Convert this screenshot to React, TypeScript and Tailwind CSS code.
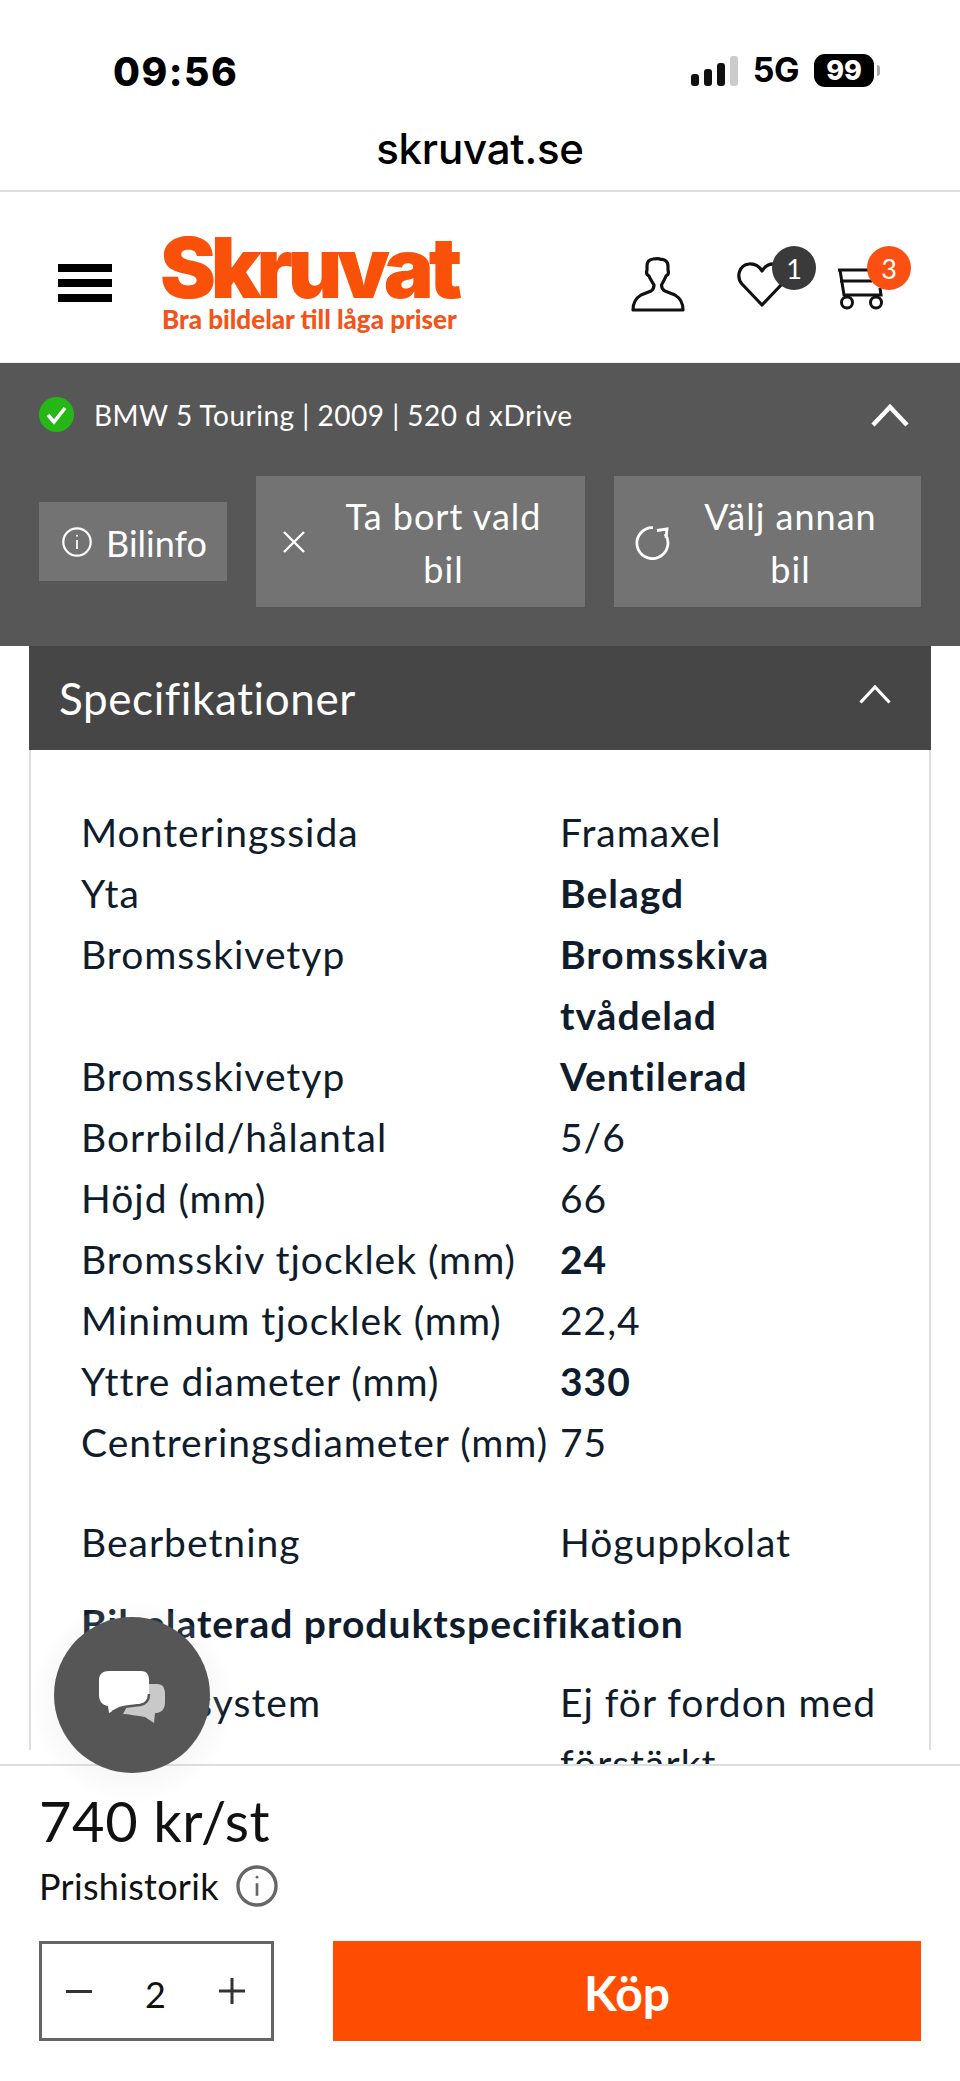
import React from "react";

const F = "font-['Lato','Noto_Sans',sans-serif]";

function Row({ label, value, bold }: { label: string; value: React.ReactNode; bold?: boolean }) {
  return (
    <>
      <div className="whitespace-nowrap">{label}</div>
      <div className={bold ? "font-bold" : ""}>{value}</div>
    </>
  );
}

function Person() {
  return (
    <svg width="54" height="55" viewBox="0 0 54 55" fill="none" stroke="#111" strokeWidth="3.2" strokeLinejoin="round">
      <path d="M2 53 H52 C52 45 49 41 44 38 L34 34 C32 33 30.5 31 30.5 28 C31.5 26 34 22 35 19 C37 18 38 16 37 13 L37 9 C37 4 33 2 30 2.5 C28 1 25 1.5 22 2 C18 2.5 16 5 16 9 L16 13 C15 16 16 18 18 19 C19 22 22 26 23 28 C23 31 21.5 33 20 34 L10 38 C5 41 2 45 2 53 Z" />
    </svg>
  );
}

function Heart() {
  return (
    <svg width="50" height="47" viewBox="0 0 50 47" fill="none" stroke="#111" strokeWidth="3.2" strokeLinejoin="round">
      <path d="M25 44 L5 23 C-1 16 2 4 12 3 C18 2.5 22 5 25 10 C28 5 32 2.5 38 3 C48 4 51 16 45 23 Z" />
    </svg>
  );
}

function Cart() {
  return (
    <svg width="46" height="42" viewBox="0 0 46 42" fill="none" stroke="#111" strokeWidth="3">
      <path d="M0 2 H34 M2 13 H34" />
      <path d="M2 2 L6 27 H43 L42 20" />
      <circle cx="9" cy="34.5" r="5.5" />
      <circle cx="38" cy="34.5" r="5.5" />
    </svg>
  );
}

function InfoIcon({ size, color, sw }: { size: number; color: string; sw: number }) {
  return (
    <svg width={size} height={size} viewBox="0 0 30 30" fill="none" stroke={color} strokeWidth={sw}>
      <circle cx="15" cy="15" r={15 - sw / 2 - 0.2} />
      <path d="M15 13 V22" strokeWidth={sw * 0.8} />
      <circle cx="15" cy="8.7" r="1" fill={color} stroke="none" />
    </svg>
  );
}

export default function App() {
  return (
    <div className={`${F} relative flex h-[2081px] w-[960px] flex-col overflow-hidden bg-white text-[#0f1c2b]`}>
      {/* iOS status bar */}
      <div className="relative flex h-[192px] shrink-0 flex-col border-b-2 border-[#dcdcdc] font-['Inter',sans-serif] text-black">
        <div className="flex h-[124px] items-start justify-between pr-[80px] pl-[113px] pt-[48px]">
          <div className="text-[39px] leading-[48px] font-extrabold tracking-[1.5px]">09:56</div>
          <div className="flex items-center pt-[5px]">
            <div className="flex h-[31px] items-end gap-[5px]">
              <div className="h-[12px] w-[8px] rounded-[3px] bg-[#111]" />
              <div className="h-[17px] w-[8px] rounded-[3px] bg-[#111]" />
              <div className="h-[23px] w-[8px] rounded-[3px] bg-[#111]" />
              <div className="h-[30px] w-[8px] rounded-[3px] bg-[#ccc]" />
            </div>
            <div className="ml-[15px] text-[34px] leading-[34px] font-bold tracking-[-0.5px]">5G</div>
            <div className="ml-[15px] flex h-[33px] w-[60px] items-center justify-center rounded-[11px] bg-black text-[27px] leading-none font-extrabold text-white">
              99
            </div>
            <div className="ml-[3px] h-[11px] w-[3px] rounded-r-full bg-[#aaa]" />
          </div>
        </div>
        <div className="text-center text-[42px] leading-[50px] font-medium tracking-[-0.2px]">skruvat.se</div>
      </div>

      {/* Site header */}
      <div className="flex h-[171px] shrink-0 items-start border-b border-[#eee]">
        <div className="mt-[72px] ml-[58px] flex w-[54px] flex-col gap-[7px]">
          <div className="h-[8px] bg-black" />
          <div className="h-[8px] bg-black" />
          <div className="h-[8px] bg-black" />
        </div>
        <div className="mt-[38px] ml-[48px] w-[302px] text-[#f9500a]">
          <div className="font-['Inter',sans-serif] text-[84px] leading-[75px] font-black tracking-[-5.2px] whitespace-nowrap">Skruvat</div>
          <div className="ml-[2px] text-[26px] leading-[28px] font-black whitespace-nowrap text-[#f2541a]">Bra bildelar till låga priser</div>
        </div>
        <div className="ml-[169px] flex h-full items-start pt-[65px]">
          <Person />
          <div className="relative mt-[4px] ml-[52px]">
            <Heart />
            <div className="absolute -top-[15px] -right-[29px] flex h-[44px] w-[44px] items-center justify-center rounded-full bg-[#3a3a3a] text-[27px] leading-none text-white">
              1
            </div>
          </div>
          <div className="relative mt-[11px] ml-[51px]">
            <Cart />
            <div className="absolute -top-[22px] -right-[27px] flex h-[44px] w-[44px] items-center justify-center rounded-full bg-[#fb5012] text-[27px] leading-none text-white">
              3
            </div>
          </div>
        </div>
      </div>

      {/* Selected car panel */}
      <div className="h-[283px] shrink-0 bg-[#575757] px-[39px] text-white">
        <div className="flex h-[113px] items-center pb-[10px]">
          <svg width="35" height="35" viewBox="0 0 35 35">
            <circle cx="17.5" cy="17.5" r="17.5" fill="#25b814" />
            <path d="M9 18 L15 25 L26 11" fill="none" stroke="#fff" strokeWidth="3.6" />
          </svg>
          <div className="ml-[20px] text-[28px] leading-none tracking-[0.5px]">BMW 5 Touring | 2009 | 520 d xDrive</div>
          <svg className="ml-auto mr-[12px]" width="38" height="24" viewBox="0 0 38 24" fill="none" stroke="#fff" strokeWidth="4.5">
            <path d="M2 22 L19 4 L36 22" />
          </svg>
        </div>
        <div className="flex items-center">
          <div className="flex h-[79px] w-[188px] items-center bg-[#737373] pl-[23px]">
            <InfoIcon size={30} color="#fff" sw={2.2} />
            <span className="ml-[14px] pt-[2px] text-[36px] leading-none">Bilinfo</span>
          </div>
          <div className="ml-[29px] flex h-[131px] w-[329px] items-center bg-[#737373] pl-[27px]">
            <svg width="22" height="22" viewBox="0 0 22 22" fill="none" stroke="#fff" strokeWidth="2.4">
              <path d="M1 1 L21 21 M21 1 L1 21" />
            </svg>
            <span className="ml-[15px] flex-1 pt-[3px] pr-[18px] text-center text-[36px] leading-[53px] tracking-[1px]">
              Ta bort vald
              <br />
              bil
            </span>
          </div>
          <div className="ml-[29px] flex h-[131px] w-[307px] items-center bg-[#737373] pl-[21px]">
            <svg width="36" height="36" viewBox="0 0 36 36" fill="none" stroke="#fff" strokeWidth="2.8">
              <path d="M18 3.6 A15.5 15.5 0 1 0 30 10" />
              <path d="M22 6.5 L32 5 L31 14" />
            </svg>
            <span className="ml-[12px] flex-1 pt-[3px] pr-[23px] text-center text-[36px] leading-[53px] tracking-[1px]">
              Välj annan
              <br />
              bil
            </span>
          </div>
        </div>
      </div>

      {/* Specifications */}
      <div className="min-h-0 flex-1 overflow-hidden px-[29px]">
        <div className="flex h-[104px] items-center justify-between bg-[#464646] pr-[40px] pl-[30px] text-white">
          <span className="text-[44px] leading-none tracking-[0.6px]">Specifikationer</span>
          <svg className="mb-[8px]" width="32" height="19" viewBox="0 0 32 19" fill="none" stroke="#fff" strokeWidth="3.2">
            <path d="M1.5 17.5 L16 2 L30.5 17.5" />
          </svg>
        </div>
        <div className="h-[1000px] border-x-2 border-[#dedede] pt-[52px] pl-[50px] text-[39px] leading-[61px] tracking-[1px]">
          <div className="grid grid-cols-[479px_1fr]">
            <Row label="Monteringssida" value="Framaxel" />
            <Row label="Yta" value="Belagd" bold />
            <Row label="Bromsskivetyp" value={<>Bromsskiva<br />tvådelad</>} bold />
            <Row label="Bromsskivetyp" value="Ventilerad" bold />
            <Row label="Borrbild/hålantal" value="5/6" />
            <Row label="Höjd (mm)" value="66" />
            <Row label="Bromsskiv tjocklek (mm)" value="24" bold />
            <Row label="Minimum tjocklek (mm)" value="22,4" />
            <Row label="Yttre diameter (mm)" value="330" bold />
            <Row label="Centreringsdiameter (mm)" value="75" />
          </div>
          <div className="mt-[39px] grid grid-cols-[479px_1fr]">
            <Row label="Bearbetning" value="Höguppkolat" />
          </div>
          <div className="mt-[20px] font-bold">Bilrelaterad produktspecifikation</div>
          <div className="mt-[18px] grid grid-cols-[479px_1fr]">
            <Row label="Bromssystem" value={<>Ej för fordon med<br />förstärkt</>} />
          </div>
        </div>
      </div>

      {/* Buy bar */}
      <div className="h-[317px] shrink-0 border-t-2 border-[#dedede] bg-white px-[39px] text-[#111]">
        <div className="mt-[24px] text-[56px] leading-[62px] tracking-[0.6px]">740 kr/st</div>
        <div className="mt-[12px] flex items-center">
          <span className="text-[36px] leading-[44px] tracking-[0.3px]">Prishistorik</span>
          <span className="ml-[17px]">
            <InfoIcon size={42} color="#666" sw={2.4} />
          </span>
        </div>
        <div className="mt-[33px] flex">
          <div className="flex h-[100px] w-[235px] items-center border-[3px] border-[#666] pr-[26px] pl-[24px]">
            <div className="h-[3px] w-[26px] bg-[#333]" />
            <div className="flex-1 pt-[6px] text-center text-[36px] leading-none">2</div>
            <svg width="26" height="26" viewBox="0 0 26 26" stroke="#333" strokeWidth="3">
              <path d="M0 13 H26 M13 0 V26" />
            </svg>
          </div>
          <div className="ml-[59px] flex h-[100px] w-[588px] items-center justify-center bg-[#ff4d00] pt-[4px] text-[48px] leading-none font-bold text-white">
            Köp
          </div>
        </div>
      </div>

      {/* Chat bubble */}
      <div className="absolute top-[1617px] left-[54px] flex h-[156px] w-[156px] items-center justify-center rounded-full bg-[#565656] pt-[3px] pl-[2px] shadow-[0_0_0_14px_rgba(255,255,255,0.1),0_6px_20px_12px_rgba(0,0,0,0.03)]">
        <svg width="68" height="54" viewBox="0 0 68 54">
          <path d="M40 14 H58 C64 14 66 18 66 24 V32 C66 39 63 42 58 43 L56 43 L55 53 L46 47 C38 46 30 44 24 44 Z" fill="#c9c9c9" />
          <path d="M10 1 H42 C48 1 50 5 50 10 V24 C50 31 47 34 41 35 C33 36 27 36 21 38 L10 43 L9 36 C3 35 0 31 0 25 V10 C0 4 4 1 10 1 Z" fill="#fff" />
          <path d="M50 24 C50 31 47 34 41 35 C33 36 27 36 21 38 L13 42" fill="none" stroke="#565656" strokeWidth="2.5" />
        </svg>
      </div>
    </div>
  );
}
